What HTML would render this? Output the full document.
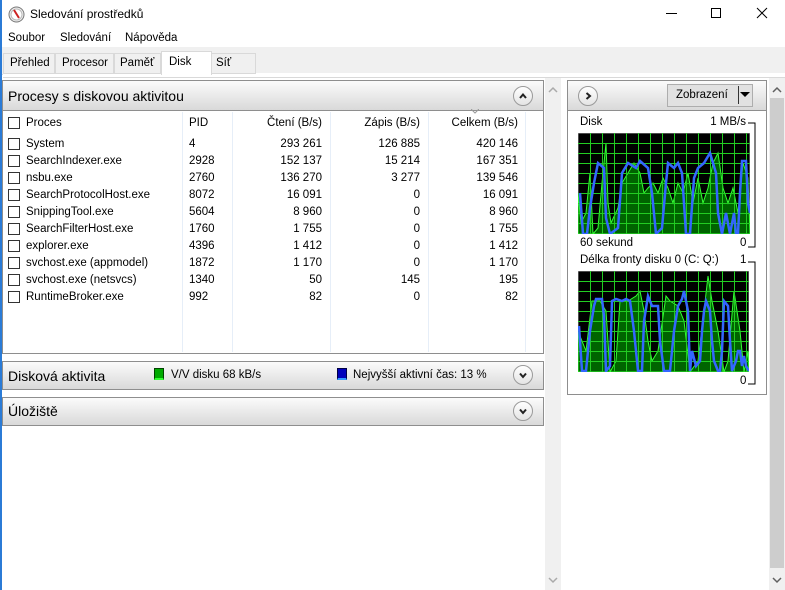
<!DOCTYPE html>
<html><head><meta charset="utf-8"><style>
*{margin:0;padding:0;box-sizing:border-box}
body{width:785px;height:590px;overflow:hidden;background:#fff;font-family:"Liberation Sans",sans-serif;font-size:11.5px;color:#000;position:relative}
.a{position:absolute;white-space:nowrap}
.hdr{position:absolute;background:linear-gradient(#fbfbfb,#d9d9d9);border:1px solid #8e8e8e}
.circ{position:absolute;width:20px;height:20px;border-radius:50%;border:1px solid #9a9a9a;background:linear-gradient(#fff,#e4e4e4)}
.cb{position:absolute;width:12px;height:12px;border:1px solid #333;background:#fff}
.sep{position:absolute;top:112px;height:240px;width:1px;background:#e6eef8}
.r{text-align:right}
</style></head><body>
<div class="a" style="left:0;top:0;width:2px;height:590px;background:#2b7bd6"></div>
<svg class="a" style="left:8px;top:6px" width="17" height="17" viewBox="0 0 17 17"><circle cx="8.5" cy="8.5" r="7.5" fill="#eee" stroke="#777"/><circle cx="8.5" cy="8.5" r="5.5" fill="#fff" stroke="#bbb"/><line x1="6" y1="4" x2="11" y2="12" stroke="#c22" stroke-width="2"/></svg>
<div class="a" style="left:30px;top:7px;font-size:12px">Sledování prostředků</div>
<div class="a" style="left:666px;top:13px;width:11px;height:1px;background:#000"></div>
<div class="a" style="left:711px;top:8px;width:10px;height:10px;border:1px solid #000"></div>
<svg class="a" style="left:756px;top:7px" width="12" height="12"><path d="M1 1L11 11M11 1L1 11" stroke="#000"/></svg>
<div class="a" style="left:8px;top:32px">Soubor</div>
<div class="a" style="left:60px;top:32px">Sledování</div>
<div class="a" style="left:125px;top:32px">Nápověda</div>
<div class="a" style="left:2px;top:47px;width:783px;height:28px;background:#f0f0f0;border-bottom:1px solid #d9d9d9"></div>
<div class="a" style="left:3px;top:73px;width:782px;height:5px;background:#fff;border-bottom:1px solid #d9d9d9"></div>
<div class="a" style="left:3px;top:53px;width:52px;height:21px;border:1px solid #d9d9d9;background:#f0f0f0;padding:3px 0 0 6px">Přehled</div>
<div class="a" style="left:55px;top:53px;width:59px;height:21px;border:1px solid #d9d9d9;background:#f0f0f0;padding:3px 0 0 6px">Procesor</div>
<div class="a" style="left:114px;top:53px;width:47px;height:21px;border:1px solid #d9d9d9;background:#f0f0f0;padding:3px 0 0 5px">Paměť</div>
<div class="a" style="left:161px;top:51px;width:51px;height:24px;border:1px solid #d9d9d9;border-bottom:none;background:#fff;padding:4px 0 0 7px">Disk</div>
<div class="a" style="left:212px;top:53px;width:44px;height:21px;border:1px solid #d9d9d9;border-left:none;background:#f0f0f0;padding:3px 0 0 4px">Síť</div>
<div class="a" style="left:2px;top:80px;width:542px;height:274px;border:1px solid #8e8e8e;background:#fff"></div>
<div class="hdr" style="left:2px;top:80px;width:542px;height:31px"></div>
<div class="a" style="left:8px;top:88px;font-size:14px">Procesy s diskovou aktivitou</div>
<div class="circ" style="left:513px;top:86px"></div>
<svg class="a" style="left:517px;top:90px" width="12" height="12"><path d="M3 8L6 4.5L9 8" stroke="#222" stroke-width="2" fill="none"/></svg>
<div class="sep" style="left:182px"></div><div class="sep" style="left:232px"></div><div class="sep" style="left:330px"></div><div class="sep" style="left:428px"></div><div class="sep" style="left:525px"></div>
<svg class="a" style="left:471px;top:109px" width="8" height="5"><path d="M0 0L4 4L8 0" stroke="#999" fill="none"/></svg>
<div class="hdr" style="left:2px;top:361px;width:542px;height:29px"></div>
<div class="a" style="left:8px;top:368px;font-size:14px">Disková aktivita</div>
<div class="a" style="left:154px;top:368px;width:10px;height:12px;background:#0a0;border:1px solid #040;border-bottom:2px solid #3f3"></div>
<div class="a" style="left:171px;top:369px">V/V disku 68 kB/s</div>
<div class="a" style="left:337px;top:368px;width:10px;height:12px;background:#00b;border:1px solid #004;border-bottom:2px solid #39f"></div>
<div class="a" style="left:353px;top:369px">Nejvyšší aktivní čas: 13 %</div>
<div class="circ" style="left:513px;top:365px"></div>
<svg class="a" style="left:517px;top:369px" width="12" height="12"><path d="M3 4.5L6 8L9 4.5" stroke="#222" stroke-width="2" fill="none"/></svg>
<div class="hdr" style="left:2px;top:397px;width:542px;height:29px"></div>
<div class="a" style="left:8px;top:403px;font-size:14px">Úložiště</div>
<div class="circ" style="left:513px;top:401px"></div>
<svg class="a" style="left:517px;top:405px" width="12" height="12"><path d="M3 4.5L6 8L9 4.5" stroke="#222" stroke-width="2" fill="none"/></svg>
<div class="a" style="left:545px;top:78px;width:16px;height:512px;background:#f0f0f0"></div>
<svg class="a" style="left:548px;top:86px" width="10" height="8"><path d="M1 6L5 2L9 6" stroke="#aaa" stroke-width="1.5" fill="none"/></svg>
<svg class="a" style="left:548px;top:576px" width="10" height="8"><path d="M1 2L5 6L9 2" stroke="#aaa" stroke-width="1.5" fill="none"/></svg>
<div class="a" style="left:567px;top:80px;width:200px;height:315px;border:1px solid #8e8e8e;background:#fff"></div>
<div class="hdr" style="left:567px;top:80px;width:200px;height:31px"></div>
<div class="circ" style="left:578px;top:86px"></div>
<svg class="a" style="left:582px;top:90px" width="12" height="12"><path d="M4.5 3L8 6L4.5 9" stroke="#222" stroke-width="2" fill="none"/></svg>
<div class="a" style="left:667px;top:84px;width:86px;height:23px;background:#e1e1e1;border:1px solid #adadad"></div>
<div class="a" style="left:676px;top:89px">Zobrazení</div>
<div class="a" style="left:738px;top:86px;width:1px;height:18px;background:#333"></div>
<svg class="a" style="left:740px;top:92px" width="10" height="6"><path d="M0 0H10L5 5Z" fill="#000"/></svg>
<div class="a" style="left:580px;top:116px">Disk</div>
<div class="a r" style="left:670px;top:116px;width:76px">1 MB/s</div>
<div class="a" style="left:580px;top:237px">60 sekund</div>
<div class="a" style="left:740px;top:237px">0</div>
<div class="a" style="left:580px;top:254px">Délka fronty disku 0 (C: Q:)</div>
<div class="a" style="left:740px;top:254px">1</div>
<div class="a" style="left:740px;top:375px">0</div>
<svg class="a" style="left:748px;top:120px" width="12" height="265"><path d="M0 3H7V127H0M0 142H7V264H0" stroke="#000" fill="none"/></svg>
<svg class="a" style="left:578px;top:133px" width="172" height="101" viewBox="0 0 172 101">
<rect width="172" height="101" fill="#000" stroke="#999"/>
<path d="M0 101V60L3 90L8 80L12 40L15 101L20 95L24 50L28 10L30 70L33 90L40 75L44 50L50 40L56 30L62 40L66 60L70 55L75 50L80 60L85 45L90 55L95 70L100 50L105 60L110 40L115 70L120 45L125 70L130 55L135 30L140 20L145 55L150 70L155 55L160 80L165 30L170 45L172 101Z" fill="#006400" stroke="#3f3"/>
<g stroke="#2c2" stroke-width="1"><path d="M0 10.5H172M0 20.5H172M0 30.5H172M0 40.5H172M0 50.5H172M0 60.5H172M0 70.5H172M0 80.5H172M0 90.5H172"/><path d="M12.5 0V101M24.5 0V101M36.5 0V101M48.5 0V101M60.5 0V101M72.5 0V101M84.5 0V101M96.5 0V101M108.5 0V101M120.5 0V101M132.5 0V101M144.5 0V101M156.5 0V101M168.5 0V101"/></g>
<path d="M2 60L5 101L9 101L12 75L16 50L20 30L26 35L28 85L32 101L40 95L44 40L50 30L58 35L62 28L70 35L74 60L78 101L84 95L88 50L90 30L96 35L100 30L104 40L108 101L112 101L116 45L120 35L126 30L132 20L138 40L140 80L144 101L148 80L152 101L156 80L158 101L160 101L162 60L164 28L168 28L170 70L172 80" stroke="#36f" stroke-width="2.5" fill="none"/>
</svg>
<svg class="a" style="left:578px;top:271px" width="171" height="101" viewBox="0 0 171 101">
<rect width="171" height="101" fill="#000" stroke="#999"/>
<path d="M0 101V60L8 80L14 30L22 30L28 40L32 101L38 90L42 30L50 30L58 25L62 20L66 40L70 70L74 90L80 80L88 25L92 30L100 35L106 50L112 101L120 90L126 40L130 5L134 30L140 60L146 101L150 90L156 20L162 60L166 101L170 80L171 101Z" fill="#006400" stroke="#3f3"/>
<g stroke="#2c2"><path d="M0 10.5H171M0 20.5H171M0 30.5H171M0 40.5H171M0 50.5H171M0 60.5H171M0 70.5H171M0 80.5H171M0 90.5H171"/><path d="M12.5 0V101M24.5 0V101M36.5 0V101M48.5 0V101M60.5 0V101M72.5 0V101M84.5 0V101M96.5 0V101M108.5 0V101M120.5 0V101M132.5 0V101M144.5 0V101M156.5 0V101M168.5 0V101"/></g>
<path d="M1 55L4 100L8 100L12 60L16 35L18 28L24 28L26 45L28 100L32 95L34 30L38 28L44 30L48 28L52 30L56 60L60 100L64 100L66 50L70 25L74 35L80 35L82 70L86 100L92 100L96 60L100 35L104 28L106 20L108 30L110 40L112 100L114 80L118 95L122 90L124 60L126 40L128 30L132 40L134 70L136 90L140 100L142 100L144 80L146 30L150 35L152 70L154 100L158 90L160 80L162 80L164 95L166 85L168 95L171 100" stroke="#36f" stroke-width="2.5" fill="none"/>
</svg>
<div class="a" style="left:769px;top:78px;width:16px;height:512px;background:#f0f0f0"></div>
<div class="a" style="left:770px;top:98px;width:14px;height:470px;background:#cdcdcd"></div>
<svg class="a" style="left:772px;top:86px" width="10" height="8"><path d="M1 6L5 2L9 6" stroke="#606060" stroke-width="1.5" fill="none"/></svg>
<svg class="a" style="left:772px;top:576px" width="10" height="8"><path d="M1 2L5 6L9 2" stroke="#606060" stroke-width="1.5" fill="none"/></svg>

<div class="cb" style="left:8px;top:117px"></div>
<div class="a" style="left:26px;top:117px">Proces</div>
<div class="a" style="left:189px;top:117px">PID</div>
<div class="a r" style="left:222px;top:117px;width:100px">Čtení (B/s)</div>
<div class="a r" style="left:320px;top:117px;width:100px">Zápis (B/s)</div>
<div class="a r" style="left:418px;top:117px;width:100px">Celkem (B/s)</div>

<div class="cb" style="left:8px;top:138px"></div><div class="a" style="left:26px;top:138px">System</div><div class="a" style="left:189px;top:138px">4</div><div class="a r" style="left:222px;top:138px;width:100px">293 261</div><div class="a r" style="left:320px;top:138px;width:100px">126 885</div><div class="a r" style="left:418px;top:138px;width:100px">420 146</div>
<div class="cb" style="left:8px;top:155px"></div><div class="a" style="left:26px;top:155px">SearchIndexer.exe</div><div class="a" style="left:189px;top:155px">2928</div><div class="a r" style="left:222px;top:155px;width:100px">152 137</div><div class="a r" style="left:320px;top:155px;width:100px">15 214</div><div class="a r" style="left:418px;top:155px;width:100px">167 351</div>
<div class="cb" style="left:8px;top:172px"></div><div class="a" style="left:26px;top:172px">nsbu.exe</div><div class="a" style="left:189px;top:172px">2760</div><div class="a r" style="left:222px;top:172px;width:100px">136 270</div><div class="a r" style="left:320px;top:172px;width:100px">3 277</div><div class="a r" style="left:418px;top:172px;width:100px">139 546</div>
<div class="cb" style="left:8px;top:189px"></div><div class="a" style="left:26px;top:189px">SearchProtocolHost.exe</div><div class="a" style="left:189px;top:189px">8072</div><div class="a r" style="left:222px;top:189px;width:100px">16 091</div><div class="a r" style="left:320px;top:189px;width:100px">0</div><div class="a r" style="left:418px;top:189px;width:100px">16 091</div>
<div class="cb" style="left:8px;top:206px"></div><div class="a" style="left:26px;top:206px">SnippingTool.exe</div><div class="a" style="left:189px;top:206px">5604</div><div class="a r" style="left:222px;top:206px;width:100px">8 960</div><div class="a r" style="left:320px;top:206px;width:100px">0</div><div class="a r" style="left:418px;top:206px;width:100px">8 960</div>
<div class="cb" style="left:8px;top:223px"></div><div class="a" style="left:26px;top:223px">SearchFilterHost.exe</div><div class="a" style="left:189px;top:223px">1760</div><div class="a r" style="left:222px;top:223px;width:100px">1 755</div><div class="a r" style="left:320px;top:223px;width:100px">0</div><div class="a r" style="left:418px;top:223px;width:100px">1 755</div>
<div class="cb" style="left:8px;top:240px"></div><div class="a" style="left:26px;top:240px">explorer.exe</div><div class="a" style="left:189px;top:240px">4396</div><div class="a r" style="left:222px;top:240px;width:100px">1 412</div><div class="a r" style="left:320px;top:240px;width:100px">0</div><div class="a r" style="left:418px;top:240px;width:100px">1 412</div>
<div class="cb" style="left:8px;top:257px"></div><div class="a" style="left:26px;top:257px">svchost.exe (appmodel)</div><div class="a" style="left:189px;top:257px">1872</div><div class="a r" style="left:222px;top:257px;width:100px">1 170</div><div class="a r" style="left:320px;top:257px;width:100px">0</div><div class="a r" style="left:418px;top:257px;width:100px">1 170</div>
<div class="cb" style="left:8px;top:274px"></div><div class="a" style="left:26px;top:274px">svchost.exe (netsvcs)</div><div class="a" style="left:189px;top:274px">1340</div><div class="a r" style="left:222px;top:274px;width:100px">50</div><div class="a r" style="left:320px;top:274px;width:100px">145</div><div class="a r" style="left:418px;top:274px;width:100px">195</div>
<div class="cb" style="left:8px;top:291px"></div><div class="a" style="left:26px;top:291px">RuntimeBroker.exe</div><div class="a" style="left:189px;top:291px">992</div><div class="a r" style="left:222px;top:291px;width:100px">82</div><div class="a r" style="left:320px;top:291px;width:100px">0</div><div class="a r" style="left:418px;top:291px;width:100px">82</div>
</body></html>
